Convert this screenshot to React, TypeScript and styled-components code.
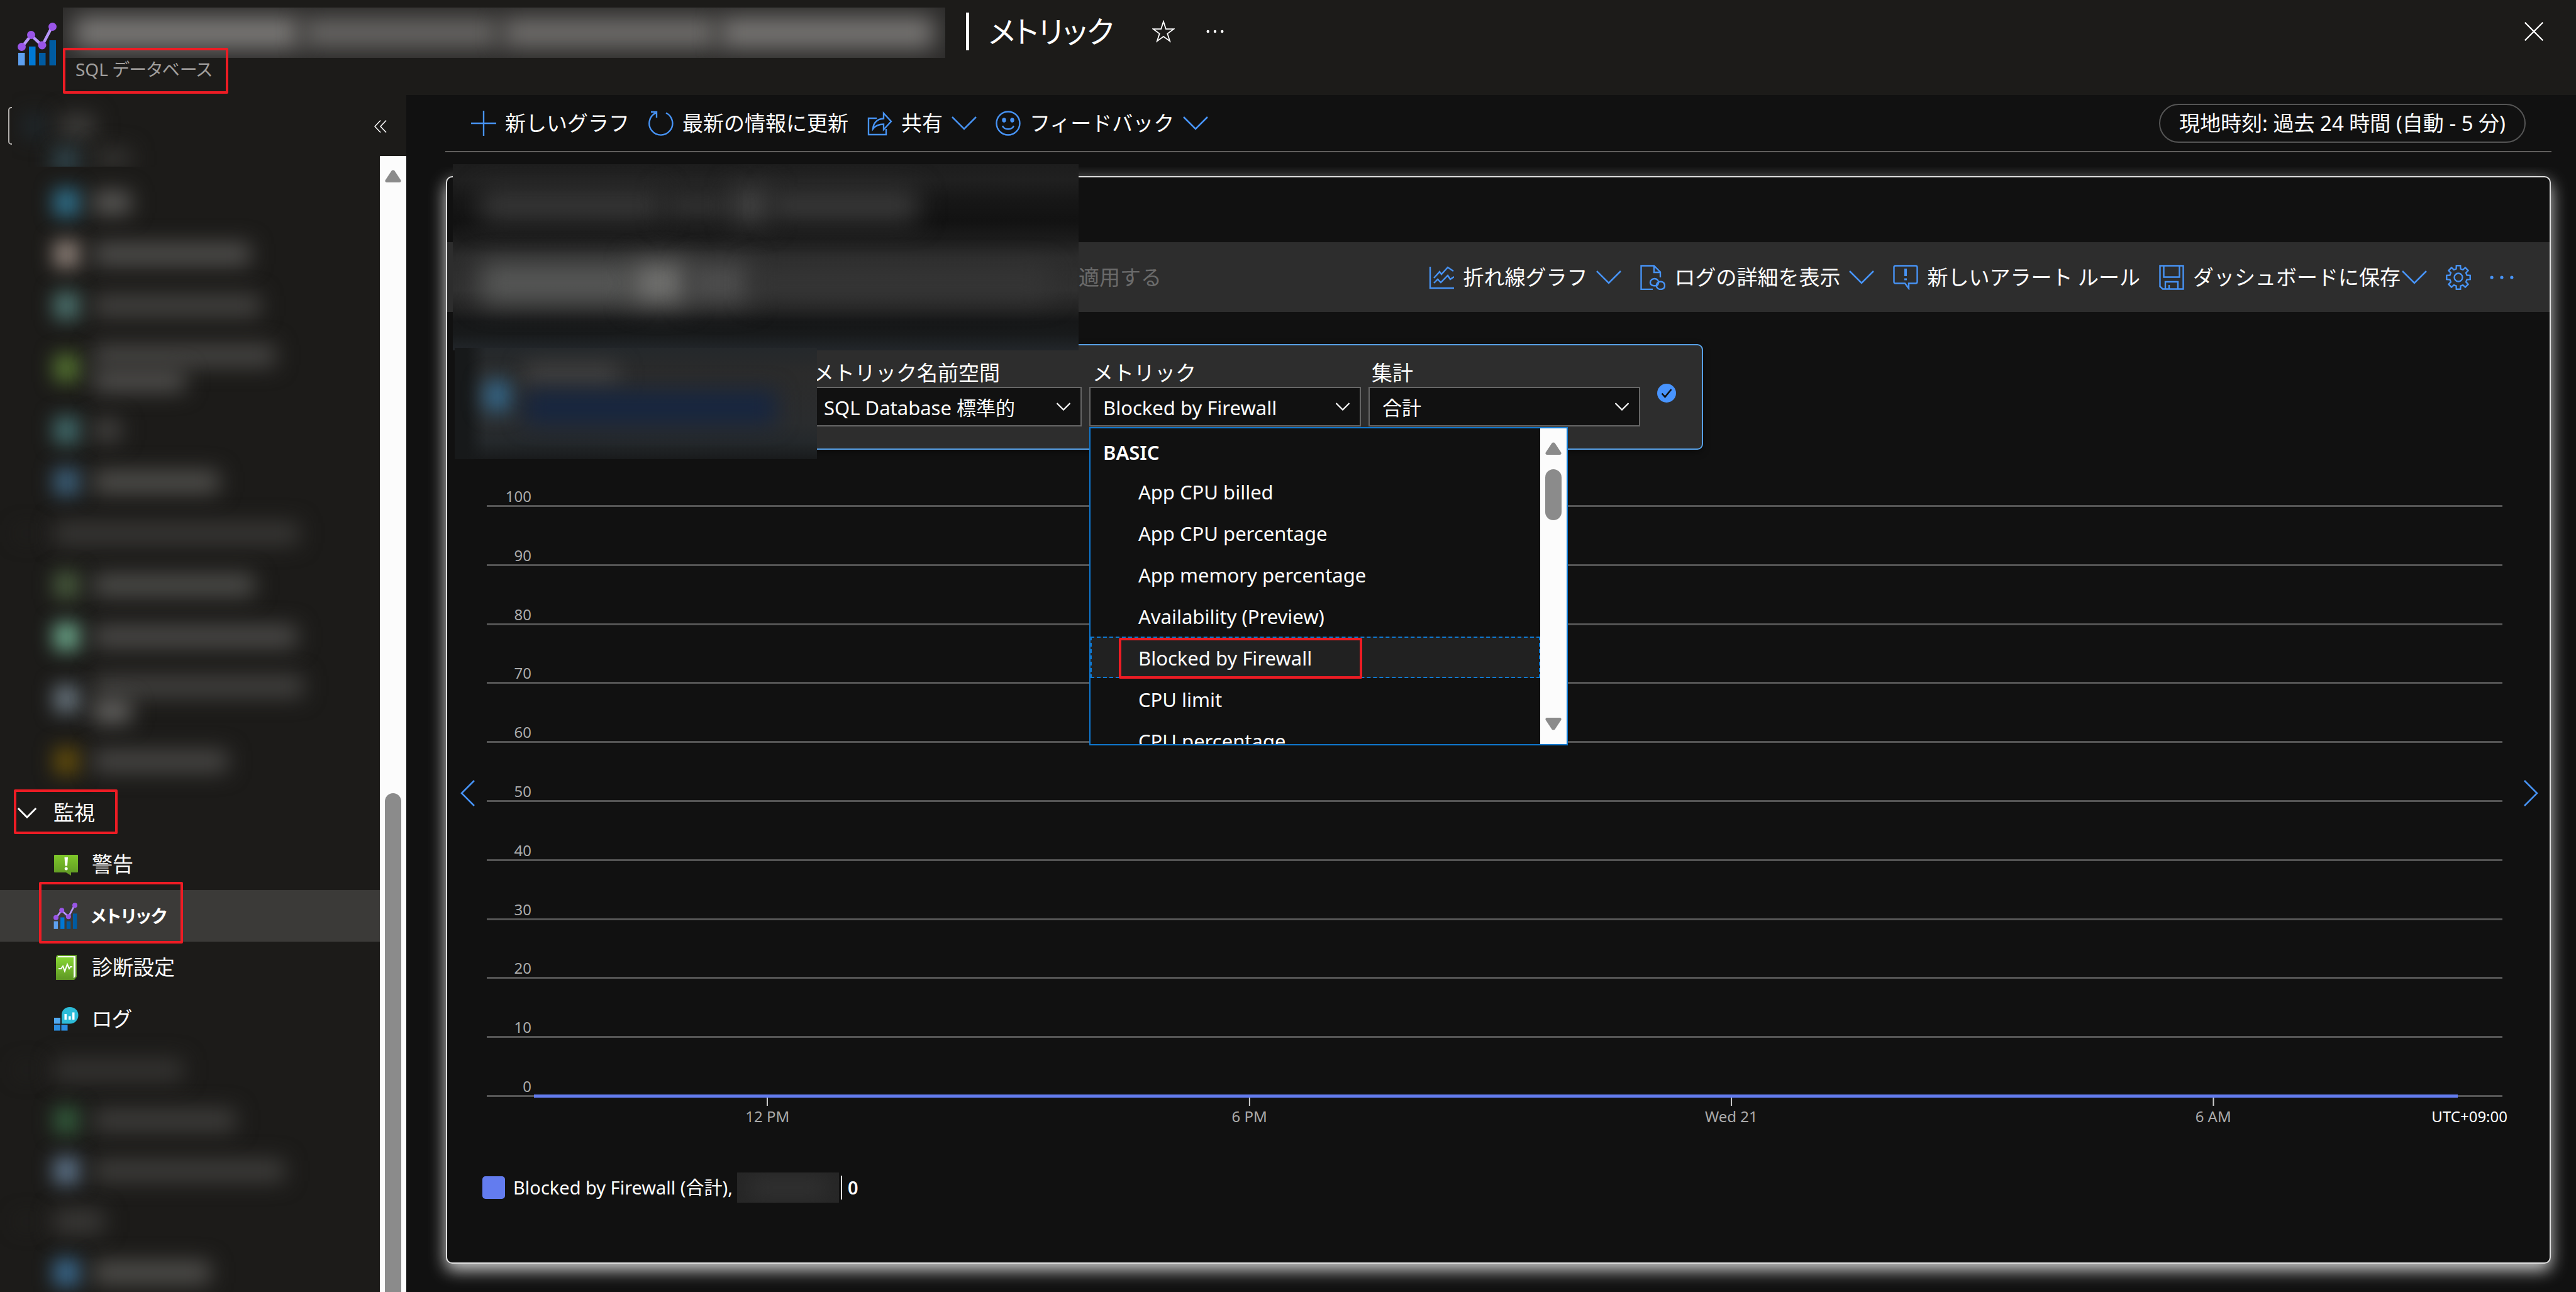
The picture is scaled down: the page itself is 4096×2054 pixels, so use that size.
import React from "react";
import styled, { createGlobalStyle, css } from "styled-components";

const color = {
  chrome: "#1c1b19",
  page: "#111111",
  raised: "#2d2d2d",
  accent: "#4793f5",
  stroke: "#666666",
  text: "#ffffff",
  mark: "#ed1c24",
};

const GlobalStyle = createGlobalStyle`
  * { box-sizing: border-box; }
  html, body, #root { height: 100%; margin: 0; }
  body {
    background: ${color.chrome};
    color: ${color.text};
    font-family: "Noto Sans", "Noto Sans CJK JP", sans-serif;
    font-size: 33px;
    line-height: 44px;
    overflow: hidden;
  }
  button, select, input { font: inherit; color: inherit; }
  button { background: none; border: 0; padding: 0; white-space: nowrap; }
  ul { list-style: none; margin: 0; padding: 0; }
  svg { display: block; flex: none; }
`;

const Page = styled.div`
  height: 100vh;
  display: flex;
  flex-direction: column;
`;

/* ---------- shared pieces ---------- */

const Smudge = styled.span<{ w: number; h: number; c: string; soft?: number }>`
  display: block;
  flex: none;
  width: ${(p) => p.w}px;
  height: ${(p) => p.h}px;
  background: ${(p) => p.c};
  filter: blur(${(p) => p.soft ?? 17}px);
`;

const Marked = styled.span<{ l: number; r: number; t: number; b: number }>`
  position: absolute;
  left: ${(p) => p.l}px;
  right: ${(p) => p.r}px;
  top: ${(p) => p.t}px;
  bottom: ${(p) => p.b}px;
  border: 4px solid ${color.mark};
  border-radius: 2px;
  pointer-events: none;
`;

const Track = styled.div<{ gap: number }>`
  width: 42px;
  flex: none;
  background: #fcfcfc;
  display: flex;
  flex-direction: column;
  align-items: center;
  padding-top: 22px;
  gap: ${(p) => p.gap}px;
`;

const Thumb = styled.div<{ size?: number }>`
  width: 26px;
  border-radius: 13px;
  background: #8b8b8b;
  ${(p) =>
    p.size
      ? css`height: ${p.size}px;`
      : css`
          flex: 1;
          border-bottom-left-radius: 0;
          border-bottom-right-radius: 0;
        `}
`;

const ArrowUp = () => (
  <svg width="26" height="20" viewBox="0 0 26 20">
    <path d="M10.4 1.8a3.2 3.2 0 0 1 5.2 0l9.6 14.4c1 1.700 0 3.800-2 3.800H2.800c-2 0-3-2.100-2-3.800z" fill="#8b8b8b" />
  </svg>
);
const Flip = styled.div`
  margin-top: auto;
  margin-bottom: 22px;
  rotate: 180deg;
`;

const Stroke = ({
  size = 40,
  w = 2.4,
  tint = color.accent,
  children,
}: {
  size?: number;
  w?: number;
  tint?: string;
  children: React.ReactNode;
}) => (
  <svg width={size} height={size} viewBox="0 0 40 40" fill="none" stroke={tint} strokeWidth={w}>
    {children}
  </svg>
);

const Chevron = ({ tint = color.accent, w = 40 }: { tint?: string; w?: number }) => (
  <svg width={w} height={w / 2 + 2} viewBox="0 0 40 22" fill="none" stroke={tint} strokeWidth={w > 30 ? 2.6 : 4}>
    <path d="M1 1l19 19L39 1" />
  </svg>
);

/* ---------- header ---------- */

const Header = styled.header`
  height: 151px;
  flex: none;
  display: flex;
  padding: 12px 52px 0 28px;
`;
const LogoSlot = styled.div`
  width: 72px;
  padding-top: 24px;
`;
const TitleColumn = styled.div`
  position: relative;
  z-index: 1;
  width: 1403px;
`;
const HiddenTitle = styled.div`
  height: 80px;
  overflow: hidden;
  background: #2c2b2a;
  display: flex;
  align-items: center;
  justify-content: space-between;
  padding: 0 18px;
`;
const Subtitle = styled.div`
  position: absolute;
  left: 20px;
  top: 80px;
  font-size: 28px;
  line-height: 36px;
  color: #a19f9d;
  font-feature-settings: "palt";
`;
const BladeTitle = styled.h1`
  margin: 0 0 0 33px;
  height: 76px;
  display: flex;
  align-items: center;
  gap: 31px;
  font-size: 48px;
  line-height: 76px;
  font-weight: 400;
  font-feature-settings: "palt";
`;
const Bar = styled.span`
  width: 5px;
  height: 60px;
  background: #fff;
`;
const HeaderActions = styled.div`
  display: flex;
  align-items: center;
  height: 76px;
  margin-left: 61px;
  gap: 50px;
`;
const CloseSlot = styled(HeaderActions)`
  margin-left: auto;
`;

const MetricsLogo = ({ size }: { size: number }) => (
  <svg width={size} height={Math.round(size * 1.1)} viewBox="0 0 62 68">
    <path d="M7 38.500L21.500 20 39 36.500 55 6" fill="none" stroke="#b796f9" strokeWidth="4.500" />
    <rect x="1" y="48" width="10.500" height="20" fill="#5ea0ef" />
    <rect x="18" y="38" width="10.500" height="30" fill="#0078d4" />
    <rect x="34" y="48" width="10.500" height="20" fill="#005ba1" />
    <rect x="50.500" y="28" width="10.500" height="40" fill="#005ba1" />
    <g fill="#9a55e8">
      <circle cx="6.500" cy="38.500" r="6.500" />
      <circle cx="21.500" cy="19.500" r="6.500" />
      <circle cx="39" cy="36" r="6.500" />
      <circle cx="55.500" cy="6.500" r="6.500" />
    </g>
  </svg>
);

const Dots = ({ tint, r = 2.2, w = 28 }: { tint: string; r?: number; w?: number }) => (
  <svg width={w} height="10" viewBox={`0 0 ${w} 10`} fill={tint}>
    <circle cx={r + 0.5} cy="5" r={r} />
    <circle cx={w / 2} cy="5" r={r} />
    <circle cx={w - r - 0.5} cy="5" r={r} />
  </svg>
);

/* ---------- side menu ---------- */

const Body = styled.div`
  flex: 1;
  min-height: 0;
  display: flex;
`;
const Side = styled.aside`
  width: 646px;
  flex: none;
  display: flex;
  flex-direction: column;
`;
const SearchRow = styled.div`
  position: relative;
  height: 97px;
  flex: none;
  display: flex;
  align-items: flex-start;
  justify-content: space-between;
  padding: 19px 31px 0 13px;
`;
const SearchBox = styled.input`
  width: 520px;
  height: 60px;
  background: transparent;
  border: 2px solid #b3b0ad;
  border-radius: 5px;
`;
const SearchCover = styled.div`
  position: absolute;
  left: 19px;
  top: -12px;
  width: 540px;
  height: 126px;
  background: ${color.chrome};
  display: flex;
  flex-direction: column;
  gap: 20px;
  padding-top: 44px;
  overflow: hidden;
`;
const CoverLine = styled.div<{ indent: number }>`
  display: flex;
  gap: 24px;
  padding-left: ${(p) => p.indent}px;
`;
const CollapseButton = styled.button`
  margin-top: 21px;
`;
const MenuArea = styled.div`
  flex: 1;
  min-height: 0;
  display: flex;
`;
const Menu = styled.nav`
  flex: 1;
  padding-top: 33px;
  overflow: hidden;
`;
const Row = styled.a<{ rowHeight?: number; active?: boolean; group?: boolean }>`
  position: relative;
  display: flex;
  align-items: center;
  gap: ${(p) => (p.group ? 27 : 21)}px;
  height: ${(p) => p.rowHeight ?? 82}px;
  padding-left: ${(p) => (p.group ? 28 : 85)}px;
  color: #fff;
  text-decoration: none;
  background: ${(p) => (p.active ? "#3b3a38" : "transparent")};
  font-size: ${(p) => (p.active ? 28 : 33)}px;
  font-weight: ${(p) => (p.active ? 700 : 400)};
  font-feature-settings: "palt";
`;
const SmudgeLines = styled.span`
  display: flex;
  flex-direction: column;
  gap: 6px;
`;

type Line = [number, string];
type Hidden = { icon?: string; lines: Line[]; rowHeight?: number };
const hiddenTop: Hidden[] = [
  { icon: "#2f6f8a", lines: [[60, "#5f5e5c"]] },
  { icon: "#8b7e76", lines: [[250, "#535250"]] },
  { icon: "#4b716d", lines: [[266, "#454442"]] },
  { icon: "#527030", lines: [[290, "#494846"], [146, "#52514f"]], rowHeight: 116 },
  { icon: "#40696a", lines: [[44, "#464543"]] },
  { icon: "#3b5e78", lines: [[200, "#53524f"]] },
  { lines: [[390, "#3a3937"]] },
  { icon: "#45573b", lines: [[256, "#50504d"]] },
  { icon: "#6aa488", lines: [[324, "#4e4d4b"]] },
  { icon: "#65717a", lines: [[334, "#444341"], [60, "#6a6967"]], rowHeight: 116 },
  { icon: "#5e4a0c", lines: [[214, "#4a4947"]] },
];
const hiddenBottom: Hidden[] = [
  { lines: [[206, "#363533"]], rowHeight: 80 },
  { icon: "#31583a", lines: [[226, "#403f3d"]], rowHeight: 80 },
  { icon: "#5b7187", lines: [[304, "#403f3d"]], rowHeight: 80 },
  { lines: [[80, "#3d3c3a"]], rowHeight: 82 },
  { icon: "#3a688c", lines: [[186, "#53524f"]], rowHeight: 80 },
];

const HiddenRow = ({ icon, lines, rowHeight }: Hidden) => (
  <Row as="div" rowHeight={rowHeight} group={!icon}>
    {icon ? <Smudge w={42} h={44} c={icon} soft={15} /> : <Smudge w={30} h={14} c="#262523" />}
    <SmudgeLines>
      {lines.map(([w, c], i) => (
        <Smudge key={i} w={w} h={34} c={c} />
      ))}
    </SmudgeLines>
  </Row>
);

const AlertIcon = () => (
  <svg width="40" height="40" viewBox="0 0 40 40">
    <defs>
      <linearGradient id="alert" x2="0" y2="1">
        <stop offset="0" stopColor="#7fc82a" />
        <stop offset="1" stopColor="#5e9624" />
      </linearGradient>
    </defs>
    <path d="M2 5h36a1 1 0 0 1 1 1v26a1 1 0 0 1-1 1H28v5l-8-5H2a1 1 0 0 1-1-1V6a1 1 0 0 1 1-1z" fill="url(#alert)" />
    <path d="M17.500 9h5.500l-1 13.500h-3.500z" fill="#fff" />
    <circle cx="20.200" cy="27" r="2.500" fill="#fff" />
  </svg>
);
const DiagIcon = () => (
  <svg width="40" height="40" viewBox="0 0 40 40">
    <defs>
      <linearGradient id="diag" x2="0" y2="1">
        <stop offset="0" stopColor="#86d633" />
        <stop offset="1" stopColor="#5e9624" />
      </linearGradient>
    </defs>
    <path d="M6 0h31v35l-4 5H4V3z" fill="#5e9624" />
    <path d="M7 2h28v32l-2.500 3H31V4H6z" fill="#fff" />
    <rect x="4" y="4" width="28" height="36" fill="url(#diag)" />
    <path d="M8 22h4l3-4 3 8 4-11 3 7 2-3h3" fill="none" stroke="#fff" strokeWidth="2" />
  </svg>
);
const LogsIcon = () => (
  <svg width="40" height="40" viewBox="0 0 40 40">
    <rect x="1" y="18" width="10" height="9.500" fill="#50a8f0" />
    <rect x="1" y="29" width="10" height="9.500" fill="#2b8de0" />
    <rect x="12.500" y="29" width="10" height="9.500" fill="#2b8de0" />
    <path d="M26 1c8 0 13.500 5.500 13.500 13S34 27.500 26 27.500H13V14C13 6.500 18 1 26 1z" fill="#2dbcd8" />
    <path d="M17.500 12h3.500v9h-3.500zM24 15.500h3.500V21H24zM30 9.500h3.500V21H30z" fill="#fff" />
  </svg>
);

/* ---------- main ---------- */

const Main = styled.main`
  flex: 1;
  min-width: 0;
  background: ${color.page};
  display: flex;
  flex-direction: column;
`;
const Toolbar = styled.div`
  height: 91px;
  flex: none;
  margin: 0 39px 24px 62px;
  padding: 0 41px;
  border-bottom: 2px solid #605e5c;
  display: flex;
  align-items: center;
  gap: 30px;
`;
const Tool = styled.button<{ tight?: boolean }>`
  display: flex;
  align-items: center;
  gap: 14px;
  svg:last-child:not(:first-child) {
    margin-left: ${(p) => (p.tight ? -12 : 0)}px;
  }
`;
const TimePill = styled.button`
  margin-left: auto;
  height: 62px;
  padding: 0 30px;
  border: 2px solid #555;
  border-radius: 31px;
`;
const StageWrap = styled.div`
  position: relative;
  flex: 1;
  min-height: 0;
  display: flex;
`;
const Stage = styled.div`
  flex: 1;
  overflow: hidden;
  display: flex;
  padding: 14px 40px 45px 63px;
`;
const Card = styled.section`
  flex: 1;
  min-width: 0;
  background: ${color.page};
  border: 2px solid #e0e0e0;
  border-radius: 10px;
  box-shadow: 0 10px 27px rgba(255, 255, 255, 0.8);
  display: flex;
  flex-direction: column;
`;
const CardTitle = styled.div`
  height: 103px;
  flex: none;
`;
const CardBar = styled.div`
  height: 111px;
  flex: none;
  background: ${color.raised};
  display: flex;
  align-items: center;
  gap: 30px;
  padding: 0 57px 0 1004px;
`;
const Dimmed = styled.button`
  color: #6b6b6b;
  margin-right: auto;
`;

const Panel = styled.div`
  position: relative;
  align-self: flex-start;
  height: 168px;
  flex: none;
  margin: 51px 0 0 39px;
  padding: 28px 41px 0 536px;
  background: ${color.raised};
  border: 2px solid #57a0e6;
  border-radius: 9px;
  box-shadow: 0 4px 12px rgba(0, 0, 0, 0.4);
  display: flex;
  align-items: flex-start;
  gap: 12px;
`;
const Field = styled.div`
  position: relative;
  width: 432px;
`;
const FieldLabel = styled.label`
  display: block;
  padding-left: 5px;
  line-height: 32px;
  margin-bottom: 6px;
`;
const SelectShell = styled.div`
  position: relative;
  svg {
    position: absolute;
    right: 18px;
    top: 25px;
    pointer-events: none;
  }
`;
const Select = styled.select`
  appearance: none;
  display: block;
  width: 100%;
  height: 63px;
  padding: 2px 60px 0 20px;
  background: ${color.page};
  border: 2px solid ${color.stroke};
  border-radius: 0;
  font-size: 31px;
`;
const Badge = styled.div`
  padding: 33px 0 0 15px;
`;
const Popup = styled.div`
  position: absolute;
  left: 0;
  top: 102px;
  width: 761px;
  height: 506px;
  background: ${color.page};
  border: 2px solid #0f78d0;
  display: flex;
  overflow: hidden;
  z-index: 2;
  font-size: 31px;
`;
const Options = styled.ul`
  flex: 1;
  padding-top: 10px;
`;
const Group = styled.li`
  padding-left: 20px;
  font-weight: 600;
  font-size: 31px;
  line-height: 57px;
`;
const Option = styled.li<{ picked?: boolean }>`
  position: relative;
  height: 66px;
  line-height: ${(p) => (p.picked ? 64 : 68)}px;
  padding-left: ${(p) => (p.picked ? 74 : 76)}px;
  ${(p) =>
    p.picked &&
    css`
      background: #212121;
      border: 2px dashed #0f78d0;
    `}
`;

const ChartRow = styled.div`
  flex: 1;
  min-height: 0;
  display: flex;
  align-items: center;
  padding: 0 18px 0 21px;
`;
const Plot = styled.div`
  flex: 1;
  align-self: stretch;
  margin: 0 33px 0 18px;
  padding-top: 60px;
  display: flex;
  flex-direction: column;
  font-size: 24px;
  line-height: 28px;
  color: #ababab;
`;
const GridLine = styled.div<{ first?: boolean }>`
  flex: ${(p) => (p.first ? "none" : "1 0 0")};
  display: flex;
  align-items: flex-end;
  border-bottom: 3px solid #555;
`;
const Tick = styled.span`
  width: 71px;
  text-align: right;
`;
const Axis = styled.div`
  position: relative;
  height: 63px;
  margin: 0 71px 0 75px;
`;
const Series = styled.div`
  height: 5px;
  margin-top: -4px;
  background: #637cef;
  position: relative;
`;
const Hour = styled.span`
  position: absolute;
  top: 1px;
  translate: -50% 0;
  display: flex;
  flex-direction: column;
  align-items: center;
  gap: 3px;
  white-space: nowrap;
  &::before {
    content: "";
    width: 2px;
    height: 13px;
    background: #ccc;
  }
`;
const Zone = styled.span`
  position: absolute;
  right: -79px;
  top: 17px;
  color: #fff;
`;
const Legend = styled.div`
  height: 48px;
  flex: none;
  margin: 57px 0 95px 56px;
  display: flex;
  align-items: center;
  font-size: 29px;
`;
const Swatch = styled.span`
  width: 36px;
  height: 36px;
  border-radius: 5px;
  background: #637cef;
  margin-right: 13px;
`;
const LegendHidden = styled.span`
  width: 162px;
  height: 48px;
  background: #262626;
  margin: 0 3px 0 7px;
  overflow: hidden;
  display: flex;
  align-items: center;
  justify-content: center;
`;
const LegendValue = styled.span`
  border-left: 2px solid #e0e0e0;
  line-height: 38px;
  padding-left: 9px;
  font-weight: 600;
`;

const CoverTop = styled.div`
  position: absolute;
  left: 74px;
  top: -5px;
  width: 995px;
  height: 296px;
  overflow: hidden;
  background: linear-gradient(
    #1d1d1d 0,
    #202020 24px,
    #161616 60px,
    #121212 90px,
    #1b1b1b 118px,
    #2c2c2c 148px,
    #303030 200px,
    #242424 228px,
    #161718 250px,
    #181a1b 270px,
    #22262a 296px
  );
  display: flex;
  flex-direction: column;
  padding: 36px 44px 0;
  gap: 58px;
`;
const CoverRow = styled.div`
  display: flex;
  align-items: center;
`;
const CoverPanel = styled.div`
  position: absolute;
  left: 77px;
  top: 287px;
  width: 576px;
  height: 177px;
  overflow: hidden;
  background: linear-gradient(90deg, #17191a 20px, transparent 50px),
    linear-gradient(#24282b 0, #2b2b2b 40px, #2a2c2e 120px, #24282b 150px, #191b1c 177px);
  display: flex;
  align-items: flex-start;
  gap: 22px;
  padding: 26px 44px 0 47px;
`;
const CoverIcon = styled.div`
  padding-top: 26px;
`;
const CoverLines = styled.div`
  display: flex;
  flex-direction: column;
  gap: 8px;
`;

const levels = [100, 90, 80, 70, 60, 50, 40, 30, 20, 10, 0];
const hours = ["12 PM", "6 PM", "Wed 21", "6 AM"];
const metrics = [
  "App CPU billed",
  "App CPU percentage",
  "App memory percentage",
  "Availability (Preview)",
  "Blocked by Firewall",
  "CPU limit",
  "CPU percentage",
];

const SelectField = ({ id, label, value, children }: { id: string; label: string; value: string; children?: React.ReactNode }) => (
  <Field>
    <FieldLabel htmlFor={id}>{label}</FieldLabel>
    <SelectShell>
      <Select id={id} defaultValue={value}>
        <option>{value}</option>
      </Select>
      <Chevron tint="#fff" w={22} />
    </SelectShell>
    {children}
  </Field>
);

const gearPath = (() => {
  const pts: string[] = [];
  for (let i = 0; i < 8; i++) {
    const base = (i * Math.PI) / 4;
    [
      [-0.25, 14],
      [-0.17, 19],
      [0.17, 19],
      [0.25, 14],
    ].forEach(([a, r]) => pts.push(`${20 + r * Math.cos(base + a)} ${20 + r * Math.sin(base + a)}`));
  }
  return `M${pts.join("L")}Z`;
})();

export default function App() {
  return (
    <Page lang="ja">
      <GlobalStyle />
      <Header>
        <LogoSlot>
          <MetricsLogo size={62} />
        </LogoSlot>
        <TitleColumn>
          <HiddenTitle>
            <Smudge w={358} h={50} c="#7c7a78" soft={18} />
            <Smudge w={310} h={46} c="#696765" soft={18} />
            <Smudge w={340} h={48} c="#706e6c" soft={18} />
            <Smudge w={340} h={50} c="#787674" soft={18} />
          </HiddenTitle>
          <Subtitle>SQL データベース</Subtitle>
          <Marked l={0} r={1140} t={64} b={2} />
        </TitleColumn>
        <BladeTitle>
          <Bar />
          メトリック
        </BladeTitle>
        <HeaderActions>
          <button aria-label="お気に入り">
            <Stroke size={36} w={2} tint="#fff">
              <path d="M20 2.500l4.300 13.200h13.900L27 23.900l4.300 13.200L20 29 8.700 37.100 13 23.900 1.800 15.700h13.900z" />
            </Stroke>
          </button>
          <button aria-label="その他">
            <Dots tint="#fff" />
          </button>
        </HeaderActions>
        <CloseSlot>
          <button aria-label="閉じる">
            <Stroke size={30} w={3} tint="#fff">
              <path d="M1 1l38 38M39 1L1 39" />
            </Stroke>
          </button>
        </CloseSlot>
      </Header>

      <Body>
        <Side>
          <SearchRow>
            <SearchBox aria-label="検索" />
            <SearchCover>
              <CoverLine indent={20}>
                <Smudge w={32} h={34} c="#212c33" />
                <Smudge w={56} h={34} c="#41403e" />
              </CoverLine>
              <CoverLine indent={66}>
                <Smudge w={40} h={34} c="#36525c" />
                <Smudge w={60} h={28} c="#373634" />
              </CoverLine>
            </SearchCover>
            <CollapseButton aria-label="折りたたむ">
              <Stroke size={20} w={3} tint="#fff">
                <path d="M20 1L2 20l18 19M38 1L20 20l18 19" />
              </Stroke>
            </CollapseButton>
          </SearchRow>
          <MenuArea>
            <Menu>
              {hiddenTop.map((r, i) => (
                <HiddenRow key={i} {...r} />
              ))}
              <Row href="#" group>
                <Chevron tint="#fff" w={30} />
                監視
                <Marked l={22} r={417} t={4} b={7} />
              </Row>
              <Row href="#">
                <AlertIcon />
                警告
              </Row>
              <Row href="#" active>
                <MetricsLogo size={38} />
                メトリック
                <Marked l={62} r={313} t={-13} b={-3} />
              </Row>
              <Row href="#">
                <DiagIcon />
                診断設定
              </Row>
              <Row href="#">
                <LogsIcon />
                ログ
              </Row>
              {hiddenBottom.map((r, i) => (
                <HiddenRow key={i} {...r} />
              ))}
            </Menu>
            <Track gap={971}>
              <ArrowUp />
              <Thumb />
            </Track>
          </MenuArea>
        </Side>

        <Main>
          <Toolbar>
            <Tool>
              <Stroke>
                <path d="M20 0v40M0 20h40" />
              </Stroke>
              新しいグラフ
            </Tool>
            <Tool>
              <Stroke>
                <path d="M28 3.500A18.500 18.500 0 1 1 11.500 3.600M4 2h9v9" />
              </Stroke>
              最新の情報に更新
            </Tool>
            <Tool>
              <Stroke>
                <path d="M15 12H2v26h28v-9M26 4v8.500C15 13 9.500 20 9 29c4-5.500 9-7.500 17-7.500V30l12-13z" />
              </Stroke>
              共有
              <Chevron />
            </Tool>
            <Tool>
              <Stroke>
                <circle cx="20" cy="20" r="18.500" />
                <ellipse cx="13.500" cy="15" rx="2" ry="2.500" fill={color.accent} />
                <ellipse cx="26.500" cy="15" rx="2" ry="2.500" fill={color.accent} />
                <path d="M11 24c3 7 15 7 18 0" />
              </Stroke>
              フィードバック
              <Chevron />
            </Tool>
            <TimePill>現地時刻: 過去 24 時間 (自動 - 5 分)</TimePill>
          </Toolbar>

          <StageWrap>
            <Stage>
              <Card>
                <CardTitle />
                <CardBar>
                  <Dimmed disabled>適用する</Dimmed>
                  <Tool>
                    <Stroke>
                      <path d="M2 3v34h38M8 21l9-10 3 4 10-11 9 6M8 29l6-6 5 5 11-11 4 6 6-4" />
                    </Stroke>
                    折れ線グラフ
                    <Chevron />
                  </Tool>
                  <Tool>
                    <Stroke>
                      <path d="M20 39H1.500V1.500H22l10 10V20M22 1.500V12h10" />
                      <path d="M25 33c-5 1-9-1-9-5s4-6 7-6 7 3 6 7-3 4-3 4M30 27c5-1 9 1 9 6s-4 6-7 6-7-3-6-7 3-4 3-4" />
                    </Stroke>
                    ログの詳細を表示
                    <Chevron />
                  </Tool>
                  <Tool>
                    <Stroke>
                      <path d="M4 1.500h32q2.500 0 2.500 2.500v23q0 2.500-2.500 2.500H25v8l-6-8H4q-2.500 0-2.500-2.500V4Q1.500 1.500 4 1.500z" />
                      <path d="M20 6v12M20 21.500v3" strokeWidth="4" />
                    </Stroke>
                    新しいアラート ルール
                  </Tool>
                  <Tool tight>
                    <Stroke>
                      <path d="M1.500 1.500h37v37H6l-4.500-4zM7.500 1.500v18h25v-18M10 38V27h20v11M16 38v-6" />
                    </Stroke>
                    ダッシュボードに保存
                    <Chevron />
                  </Tool>
                  <Tool aria-label="設定">
                    <Stroke>
                      <path d={gearPath} />
                      <circle cx="20" cy="20" r="6.500" />
                    </Stroke>
                  </Tool>
                  <Tool aria-label="その他">
                    <Dots tint={color.accent} r={2.600} w={38} />
                  </Tool>
                </CardBar>

                <Panel>
                  <SelectField id="ns" label="メトリック名前空間" value="SQL Database 標準的" />
                  <SelectField id="metric" label="メトリック" value="Blocked by Firewall">
                    <Popup>
                      <Options role="listbox" aria-label="メトリック">
                        <Group>BASIC</Group>
                        {metrics.map((m) => {
                          const picked = m === "Blocked by Firewall";
                          return (
                            <Option key={m} role="option" aria-selected={picked} picked={picked}>
                              {m}
                              {picked && <Marked l={43} r={281} t={0} b={-3} />}
                            </Option>
                          );
                        })}
                      </Options>
                      <Track gap={23}>
                        <ArrowUp />
                        <Thumb size={81} />
                        <Flip>
                          <ArrowUp />
                        </Flip>
                      </Track>
                    </Popup>
                  </SelectField>
                  <SelectField id="agg" label="集計" value="合計" />
                  <Badge>
                    <svg width="30" height="30" viewBox="0 0 30 30">
                      <circle cx="15" cy="15" r="15" fill="#4894fe" />
                      <path d="M7.500 15.500l5 5.500L22.500 9" fill="none" stroke="#111" strokeWidth="2.600" />
                    </svg>
                  </Badge>
                </Panel>

                <ChartRow>
                  <button aria-label="前へ">
                    <svg width="24" height="44" viewBox="0 0 24 44" fill="none" stroke={color.accent} strokeWidth="2.600">
                      <path d="M22 2L2 22l20 20" />
                    </svg>
                  </button>
                  <Plot>
                    {levels.map((v, i) => (
                      <GridLine key={v} first={i === 0}>
                        <Tick>{v}</Tick>
                      </GridLine>
                    ))}
                    <Axis>
                      <Series />
                      {hours.map((h, i) => (
                        <Hour key={h} style={{ left: `${12.14 + i * 25.05}%` }}>
                          {h}
                        </Hour>
                      ))}
                      <Zone>UTC+09:00</Zone>
                    </Axis>
                  </Plot>
                  <button aria-label="次へ">
                    <svg width="24" height="44" viewBox="0 0 24 44" fill="none" stroke={color.accent} strokeWidth="2.600">
                      <path d="M2 2l20 20L2 42" />
                    </svg>
                  </button>
                </ChartRow>

                <Legend>
                  <Swatch />
                  Blocked by Firewall (合計),
                  <LegendHidden>
                    <Smudge w={120} h={24} c="#353535" />
                  </LegendHidden>
                  <LegendValue>0</LegendValue>
                </Legend>
              </Card>
            </Stage>

            <CoverTop>
              <CoverRow>
                <Smudge w={290} h={50} c="#383838" soft={20} />
                <Smudge w={110} h={46} c="#343434" soft={20} />
                <Smudge w={60} h={60} c="#464646" soft={20} />
                <Smudge w={235} h={50} c="#3a3a3a" soft={20} />
              </CoverRow>
              <CoverRow>
                <Smudge w={240} h={66} c="#565756" soft={20} />
                <Smudge w={90} h={70} c="#70706e" soft={20} />
                <Smudge w={100} h={66} c="#4e4e4e" soft={20} />
                <Smudge w={475} h={50} c="#353535" soft={20} />
              </CoverRow>
            </CoverTop>
            <CoverPanel>
              <CoverIcon>
                <Smudge w={42} h={48} c="#35698c" soft={16} />
              </CoverIcon>
              <CoverLines>
                <Smudge w={150} h={34} c="#424242" />
                <Smudge w={400} h={54} c="#172640" />
              </CoverLines>
            </CoverPanel>
          </StageWrap>
        </Main>
      </Body>
    </Page>
  );
}
